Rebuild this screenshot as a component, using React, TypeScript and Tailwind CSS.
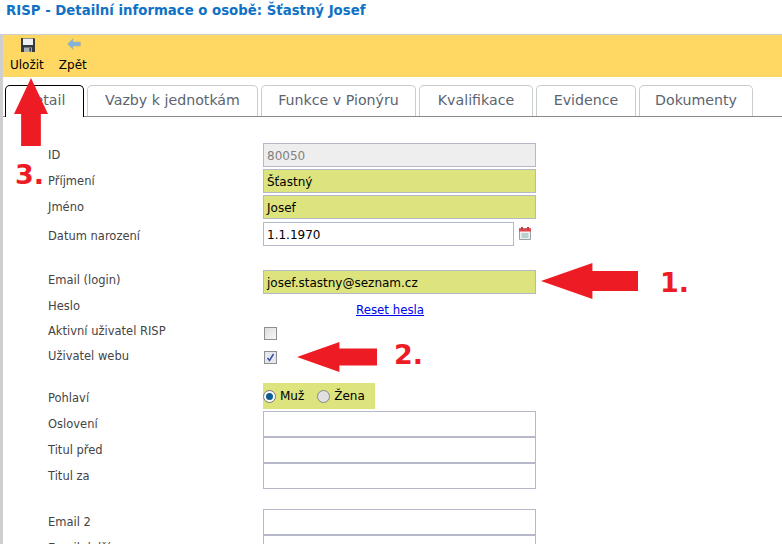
import { ReactNode } from 'react';

const tabs = [
  { name: 'Vazby k jednotkám', width: 'w-[171px]' },
  { name: 'Funkce v Pionýru', width: 'w-[155px]' },
  { name: 'Kvalifikace', width: 'w-[114px]' },
  { name: 'Evidence', width: 'w-[100px]' },
  { name: 'Dokumenty', width: 'w-[114px]' },
];

function Row({ label, height, labelTop = 'pt-[2px]', children }: { label: string; height: string; labelTop?: string; children?: ReactNode }) {
  return (
    <div className={`flex items-start ${height}`}>
      <div className={`w-[215px] pl-[45px] ${labelTop} text-[11.5px] leading-[20px] text-[#444444] whitespace-nowrap`}>{label}</div>
      <div className="pl-[45px]">{children}</div>
    </div>
  );
}

function TextBox({ value, tone = 'plain', width = 'w-[273px]', height = 'h-[24px]' }: { value?: string; tone?: 'plain' | 'req' | 'off'; width?: string; height?: string }) {
  const look = tone === 'req' ? 'bg-[#dde37d] text-black' : tone === 'off' ? 'bg-[#eeeeee] text-[#808080]' : 'bg-white text-black';
  return (
    <div className={`${width} ${height} border border-[#b5b8c8] px-[3px] text-[12px] leading-[24px] ${look}`}>{value}</div>
  );
}

function SaveIcon() {
  return (
    <svg className="ml-[2px]" width="16" height="16" viewBox="0 0 16 16">
      <path d="M1 1h13l1 1v13H1z" fill="#333b40" />
      <path d="M3 1.500h10v6.500H3z" fill="#eef0f2" />
      <path d="M4 10.500h8V15H4z" fill="#aab2b8" />
      <path d="M9.500 11h1.500v3.500H9.500z" fill="#333b40" />
    </svg>
  );
}

function BackIcon() {
  return (
    <svg className="ml-[2px] mt-[1px]" width="14" height="12" viewBox="0 0 14 12">
      <path d="M6 .5L.5 6 6 11.500V8h7.500V4H6z" fill="#7db4e6" stroke="#c9b36a" strokeWidth="0.6" />
    </svg>
  );
}

function CalendarIcon() {
  return (
    <svg width="12" height="13" viewBox="0 0 12 13">
      <path d="M.5 1.500h11v11H.5z" fill="#eef1f3" stroke="#9aa0a5" />
      <path d="M0 1.500h12v3H0z" fill="#e0474c" />
      <path d="M2 0h2v2.500H2zM8 0h2v2.500H8z" fill="#c9383c" />
      <path d="M2.500 6h7v5h-7z" fill="#b8d0d0" />
    </svg>
  );
}

function RedArrow({ dir, className }: { dir: 'left' | 'up'; className: string }) {
  return (
    <svg className={`absolute ${className}`} viewBox="0 0 100 100" preserveAspectRatio="none">
      {dir === 'left' ? (
        <path d="M0 50L53 0V22H100V78H53V100z" fill="#ed1c24" />
      ) : (
        <path d="M50 0L100 53H79V100H21V53H0z" fill="#ed1c24" />
      )}
    </svg>
  );
}

function Badge({ text, className }: { text: string; className: string }) {
  return (
    <div className={`absolute text-[27px] leading-[32px] font-bold text-[#ed1c24] ${className}`}>{text}</div>
  );
}

export default function App() {
  return (
    <div className="relative h-[544px] w-[782px] overflow-hidden bg-white font-['DejaVu_Sans',sans-serif]">
      {/* Page title */}
      <div className="h-[34px] pl-[6px] pt-[1px] text-[13.3px] font-bold leading-[20px] text-[#0f72c4] whitespace-nowrap">
        RISP - Detailní informace o osobě: Šťastný Josef
      </div>

      <div className="h-[510px] border-l-[3px] border-t border-[#cfcfcf]">
        {/* Toolbar */}
        <div className="flex h-[42px] gap-[15px] bg-[#ffd863] pl-[7px] pt-[2px] text-[12px] text-black">
          <div className="flex flex-col items-center">
            <SaveIcon />
            <span className="mt-[3px] leading-[18px]">Uložit</span>
          </div>
          <div className="flex flex-col items-center">
            <BackIcon />
            <span className="mt-[6px] leading-[18px]">Zpět</span>
          </div>
        </div>

        {/* Tabs */}
        <div className="mt-[8px] flex h-[32px] gap-[3px] border-b border-[#8a8a8a] pl-[2px] text-[14.2px] text-[#5b6470]">
          <div className="h-[32px] w-[79px] rounded-t-[5px] border border-b-0 border-black bg-white text-center leading-[28px]">Detail</div>
          {tabs.map((tab) => (
            <div key={tab.name} className={`${tab.width} h-[31px] whitespace-nowrap rounded-t-[5px] border border-b-0 border-[#c8cfc8] bg-white text-center leading-[28px]`}>
              {tab.name}
            </div>
          ))}
        </div>

        {/* Form */}
        <div className="pt-[26px]">
          <Row label="ID" height="h-[26px]"><TextBox value="80050" tone="off" /></Row>
          <Row label="Příjmení" height="h-[26px]"><TextBox value="Šťastný" tone="req" /></Row>
          <Row label="Jméno" height="h-[27px]"><TextBox value="Josef" tone="req" /></Row>
          <Row label="Datum narození" height="h-[48px]" labelTop="pt-[4px]">
            <div className="flex gap-[5px]">
              <TextBox value="1.1.1970" width="w-[251px]" />
              <div className="pt-[5px]"><CalendarIcon /></div>
            </div>
          </Row>
          <Row label="Email (login)" height="h-[26px]" labelTop="pt-0"><TextBox value="josef.stastny@seznam.cz" tone="req" /></Row>
          <Row label="Heslo" height="h-[25px]" labelTop="pt-0">
            <div className="ml-[93px] whitespace-nowrap pt-[4px] text-[11.8px] leading-[20px] text-[#0000ee] underline">Reset hesla</div>
          </Row>
          <Row label="Aktivní uživatel RISP" height="h-[25px]" labelTop="pt-0">
            <div className="ml-[1px] mt-[6px] h-[13px] w-[13px] border border-[#8e8f8f] bg-gradient-to-br from-[#dddddd] to-[#f8f8f8]" />
          </Row>
          <Row label="Uživatel webu" height="h-[37px]" labelTop="pt-0">
            <div className="ml-[1px] mt-[5px] flex h-[13px] w-[13px] items-center justify-center border border-[#8e8f8f] bg-[#e4e7f0]">
              <svg width="9" height="9" viewBox="0 0 9 9"><path d="M1.500 5L3.500 7.500L7.500 1" fill="none" stroke="#3d4f9e" strokeWidth="1.500" /></svg>
            </div>
          </Row>
          <Row label="Pohlaví" height="h-[28px]" labelTop="pt-[5px]">
            <div className="flex h-[26px] w-[112px] items-center bg-[#dde37d] text-[12px] text-black">
              <span className="flex h-[13px] w-[13px] items-center justify-center rounded-full border border-[#777777] bg-white">
                <span className="h-[7px] w-[7px] rounded-full bg-[#0f5c94]" />
              </span>
              <span className="ml-[4px]">Muž</span>
              <span className="ml-[13px] h-[13px] w-[13px] rounded-full border border-[#888888] bg-[#e0e0e0]" />
              <span className="ml-[4px]">Žena</span>
            </div>
          </Row>
          <Row label="Oslovení" height="h-[26px]" labelTop="pt-[3px]"><TextBox height="h-[26px]" /></Row>
          <Row label="Titul před" height="h-[26px]" labelTop="pt-[3px]"><TextBox height="h-[26px]" /></Row>
          <Row label="Titul za" height="h-[46px]" labelTop="pt-[3px]"><TextBox height="h-[26px]" /></Row>
          <Row label="Email 2" height="h-[26px]" labelTop="pt-[3px]"><TextBox height="h-[26px]" /></Row>
          <Row label="Email další" height="h-[26px]" labelTop="pt-[3px]"><TextBox height="h-[26px]" /></Row>
        </div>
      </div>

      {/* Annotations */}
      <RedArrow dir="up" className="left-[14px] top-[78px] h-[68px] w-[34px]" />
      <RedArrow dir="left" className="left-[541px] top-[263px] h-[36px] w-[97px]" />
      <RedArrow dir="left" className="left-[297px] top-[342px] h-[30px] w-[80px]" />
      <Badge text="1." className="left-[660px] top-[267px]" />
      <Badge text="2." className="left-[394px] top-[339px]" />
      <Badge text="3." className="left-[15px] top-[159px]" />
    </div>
  );
}
